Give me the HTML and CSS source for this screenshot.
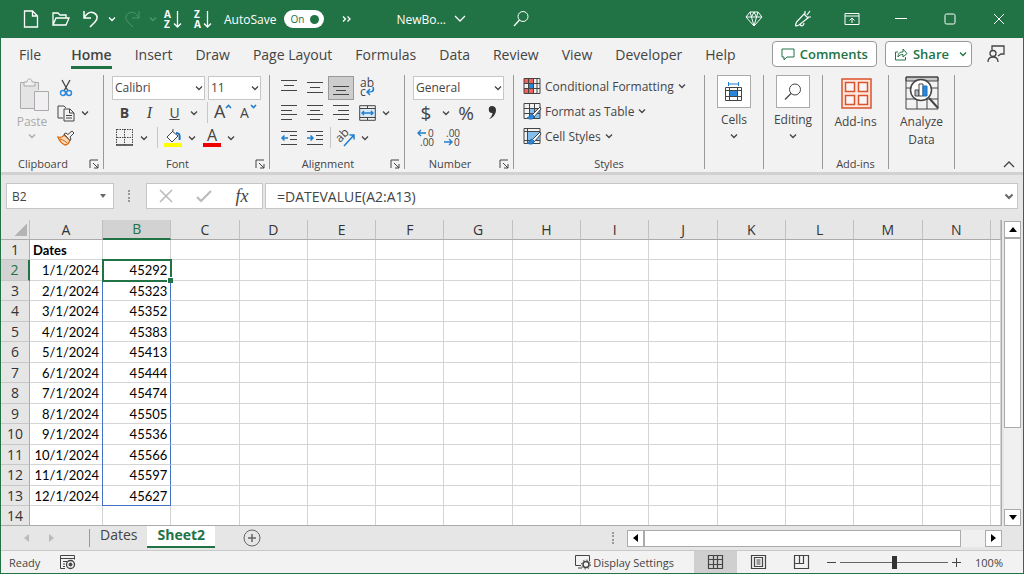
FILE: index.html
```html
<!DOCTYPE html>
<html lang="en">
<head>
  <meta charset="UTF-8">
  <meta name="viewport" content="width=device-width, initial-scale=1.0">
  <title>NewBook - Excel</title>
  <link rel="stylesheet" href="styles.css">
</head>
<body>
  <!-- Shared icons -->
  <svg class="defs" aria-hidden="true">
    <symbol id="chev" viewBox="0 0 8 8"><path d="M1 2.5l3 3 3-3" fill="none" stroke="currentColor" stroke-width="1.3"/></symbol>
    <symbol id="launch" viewBox="0 0 10 10"><path d="M1 9V1h8M4 4l5 5M9 5v4H5" fill="none" stroke="currentColor"/></symbol>
  </svg>

  <header class="titlebar">
    <button class="qat" aria-label="New"><svg width="16" height="18" viewBox="0 0 16 18"><path d="M1.500 1h8l5 5v11h-13zM9.500 1v5h5" stroke-width="1.3"/></svg></button>
    <button class="qat" aria-label="Open"><svg width="18" height="16" viewBox="0 0 18 16"><path d="M1 14V2h5l2 2h6v3M1 14l3-7h13l-3 7z" stroke-width="1.3"/></svg></button>
    <button class="qat" aria-label="Undo"><svg width="18" height="18" viewBox="0 0 18 18"><path d="M2 1v7h7M2 8c3-5 6-7 10-5 4 2 4 6 1 9l-5 5" stroke-width="1.5"/></svg></button>
    <button class="arrow" aria-label="Undo list"><svg class="chev"><use href="#chev"/></svg></button>
    <button class="qat dim" aria-label="Redo"><svg width="18" height="18" viewBox="0 0 18 18"><path d="M16 1v7H9M16 8c-3-5-6-7-10-5-4 2-4 6-1 9l5 5"/></svg></button>
    <button class="arrow dim" aria-label="Redo list"><svg class="chev"><use href="#chev"/></svg></button>
    <button class="qat" aria-label="Sort A to Z"><svg width="20" height="20" viewBox="0 0 20 20"><text x="1" y="9">A</text><text x="1" y="19">Z</text><path d="M14.500 2v16M11 14.500l3.500 3.500 3.500-3.500" stroke-width="1.3"/></svg></button>
    <button class="qat" aria-label="Sort Z to A"><svg width="20" height="20" viewBox="0 0 20 20"><text x="1" y="9">Z</text><text x="1" y="19">A</text><path d="M14.500 2v16M11 14.500l3.500 3.500 3.500-3.500" stroke-width="1.3"/></svg></button>
    <label class="autosave" for="autosave">AutoSave
      <span class="pill">On <input type="checkbox" id="autosave" checked></span>
    </label>
    <button class="more" aria-label="More commands"><svg width="10" height="8" viewBox="0 0 10 8"><path d="M1 1.500l2.500 2.500L1 6.500M5.500 1.500L8 4 5.500 6.500" stroke-width="1.3"/></svg></button>
    <button class="bookname">NewBo... <svg width="12" height="8" viewBox="0 0 12 8"><path d="M1 1l5 5 5-5" stroke-width="1.3"/></svg></button>
    <button class="search" aria-label="Search"><svg width="18" height="18" viewBox="0 0 18 18"><circle cx="11" cy="6.500" r="5"/><path d="M7.500 10L2 16" stroke-width="1.3"/></svg></button>
    <div class="window-buttons">
      <button aria-label="Premium"><svg width="18" height="16" viewBox="0 0 18 16"><path d="M5 1h8l4 5-8 9-8-9zM1 6h16M5 1l1.500 5L9 15l2.500-9L13 1M6.500 6L9 1l2.500 5"/></svg></button>
      <button aria-label="Coming soon"><svg width="18" height="18" viewBox="0 0 18 18"><path d="M10 4l4 4-9 7-3 1-.5-1 1-3zM6 14c1 3 4 2 4-1M11 4V1M13 5l3-4M14 7h3" stroke-width="1.2"/></svg></button>
      <button aria-label="Ribbon display options"><svg width="16" height="14" viewBox="0 0 16 14"><path d="M1 1.500h14v11H1zM1 4h14M8 11V6M5.500 8.500L8 6l2.500 2.500"/></svg></button>
      <button aria-label="Minimize"><svg width="12" height="12" viewBox="0 0 12 12"><path d="M0 5.500h12"/></svg></button>
      <button aria-label="Maximize"><svg width="12" height="12" viewBox="0 0 12 12"><rect x="1" y="1" width="10" height="10" rx="1.500"/></svg></button>
      <button aria-label="Close"><svg width="12" height="12" viewBox="0 0 12 12"><path d="M1 1l10 10M11 1L1 11"/></svg></button>
    </div>
  </header>

  <nav class="tabs">
    <a href="#" class="file">File</a>
    <a href="#" class="active">Home</a>
    <a href="#">Insert</a>
    <a href="#">Draw</a>
    <a href="#">Page Layout</a>
    <a href="#">Formulas</a>
    <a href="#">Data</a>
    <a href="#">Review</a>
    <a href="#">View</a>
    <a href="#">Developer</a>
    <a href="#">Help</a>
    <div class="tab-actions">
      <button class="outlined"><svg width="14" height="14" viewBox="0 0 14 14"><path d="M1 2h12v8H6l-3 3v-3H1z"/></svg>Comments</button>
      <button class="outlined share"><svg width="14" height="14" viewBox="0 0 14 14"><path d="M4 5H1.500v8h10v-3M4 10c0-4 2-5 5-5V2l4 4.500L9 10V7.500C7 7.500 5 8 4 10z"/></svg>Share<svg class="chev"><use href="#chev"/></svg></button>
      <button class="person" aria-label="Feedback"><svg width="20" height="18" viewBox="0 0 20 18"><path d="M6 5V1h12v8h-3l-3 2M2 17c0-4 2-5 5-5s5 1 5 5" stroke-width="1.3"/><circle cx="7" cy="8.500" r="3" stroke-width="1.3"/></svg></button>
    </div>
  </nav>

  <section class="ribbon">
    <div class="group clipboard">
      <div class="clip-tools">
        <button class="paste">
          <svg width="32" height="34" viewBox="0 0 32 34"><path d="M3 5h17v8h-4v17H3z" fill="#e4e4e4" stroke="none"/><path d="M6 4.500H2.500v26H16M20.500 12V4.500H17"/><path d="M6 8V4h3c0-4 5-4 5 0h3v4z" fill="#f0f0f0"/><path d="M16.500 13.500h14v19h-14z" fill="#f1eff1"/></svg>
          Paste
          <svg class="chev"><use href="#chev"/></svg>
        </button>
        <div class="rows">
          <div class="row">
            <button class="tool" aria-label="Cut"><svg width="14" height="18" viewBox="0 0 14 18"><path d="M3 1l6 11M11 1L5 12" stroke-width="1.3"/><g stroke="#2b88d8" stroke-width="1.4"><circle cx="4" cy="14" r="2.500"/><circle cx="10" cy="14" r="2.500"/></g></svg></button>
          </div>
          <div class="row">
            <button class="tool" aria-label="Copy"><svg width="18" height="18" viewBox="0 0 18 18"><path d="M6 14H1V2h6l2 2M7 5h6l4 4v8H7zM12.500 5v4H17M9 11.500h6M9 14h6"/></svg></button>
            <button class="arrow" aria-label="Copy options"><svg class="chev"><use href="#chev"/></svg></button>
          </div>
          <div class="row">
            <button class="tool" aria-label="Format Painter"><svg width="18" height="16" viewBox="0 0 18 16"><path d="M1 7c3 1 5 0 6-2l6 5c-1 3-3 5-5 5C5 14 2 10 1 7z" fill="#fbd9b8" stroke="#d9660b" stroke-width="1.3"/><path d="M3 9c4 1 6 3 7 4" stroke="#d9660b"/><path d="M7 4l2-1 2 1.500L15 1l2 2-4 4 1 2-1 1.500z" fill="#f3f2f2"/></svg></button>
          </div>
        </div>
      </div>
      <div class="group-label">Clipboard<button aria-label="Clipboard settings"><svg><use href="#launch"/></svg></button></div>
    </div>

    <div class="group font">
      <div class="row">
        <span class="pick font-name"><select aria-label="Font"><option>Calibri</option></select><svg class="chev"><use href="#chev"/></svg></span>
        <span class="pick font-size"><select aria-label="Font size"><option>11</option></select><svg class="chev"><use href="#chev"/></svg></span>
      </div>
      <div class="row">
        <button class="tool bold">B</button>
        <button class="tool italic">I</button>
        <button class="tool underline">U</button>
        <button class="arrow" aria-label="Underline options"><svg class="chev"><use href="#chev"/></svg></button>
        <span class="sep"></span>
        <button class="tool" aria-label="Increase font size"><svg width="20" height="18" viewBox="0 0 20 18"><text x="1" y="14" font-size="18">A</text><path d="M13 4l2.500-2.500L18 4" stroke="#1e7fd0" stroke-width="1.600"/></svg></button>
        <button class="tool" aria-label="Decrease font size"><svg width="20" height="18" viewBox="0 0 20 18"><text x="2" y="14" font-size="14">A</text><path d="M13 1l2.500 2.500L18 1" stroke="#1e7fd0" stroke-width="1.600"/></svg></button>
      </div>
      <div class="row">
        <button class="tool" aria-label="Borders"><svg width="17" height="17" viewBox="0 0 17 17"><path d="M.5 0v16M16.500 0v16M1 .5h16M8.500 0v16M1 8.500h15" stroke-dasharray="1.500 1"/><path d="M0 16h17" stroke-width="1.600"/></svg></button>
        <button class="arrow" aria-label="Border options"><svg class="chev"><use href="#chev"/></svg></button>
        <span class="sep"></span>
        <button class="tool" aria-label="Fill color"><svg width="18" height="18" viewBox="0 0 18 18"><path d="M8 2l6 5-6 6-5-5 6-6V0" fill="#fff"/><path d="M12 4c4 0 4 3 3.500 7" stroke="#1e6fbe" stroke-width="2"/><path d="M0 16h18" stroke="#ff0" stroke-width="4"/></svg></button>
        <button class="arrow" aria-label="Fill colors"><svg class="chev"><use href="#chev"/></svg></button>
        <button class="tool" aria-label="Font color"><svg width="18" height="18" viewBox="0 0 18 18"><text x="4" y="12" font-size="16">A</text><path d="M0 16h18" stroke="#e00" stroke-width="4"/></svg></button>
        <button class="arrow" aria-label="Font colors"><svg class="chev"><use href="#chev"/></svg></button>
      </div>
      <div class="group-label">Font<button aria-label="Font settings"><svg><use href="#launch"/></svg></button></div>
    </div>

    <div class="group alignment">
      <div class="row">
        <button class="tool" aria-label="Top align"><svg width="16" height="16" viewBox="0 0 16 16"><path d="M0 .5h16M3 5.500h10M0 10.500h16"/></svg></button>
        <button class="tool" aria-label="Middle align"><svg width="16" height="16" viewBox="0 0 16 16"><path d="M0 2.500h16M3 7.500h10M0 12.500h16"/></svg></button>
        <button class="tool pressed" aria-label="Bottom align"><svg width="16" height="16" viewBox="0 0 16 16"><path d="M0 6.500h16M3 10.500h10M0 14.500h16"/></svg></button>
        <button class="tool" aria-label="Wrap text"><svg width="18" height="20" viewBox="0 0 18 20"><text x="2" y="9" font-size="12">ab</text><text x="2" y="18" font-size="12">c</text><path d="M15 9c2 5-2 5-6 5M12 11l-3 3 3 3" stroke="#1e7fd0" stroke-width="1.500"/></svg></button>
      </div>
      <div class="row">
        <button class="tool" aria-label="Align left"><svg width="16" height="16" viewBox="0 0 16 16"><path d="M0 .5h16M0 5.500h11M0 9.500h16M0 14.500h11"/></svg></button>
        <button class="tool" aria-label="Center"><svg width="16" height="16" viewBox="0 0 16 16"><path d="M0 .5h16M3 5.500h10M0 9.500h16M3 14.500h10"/></svg></button>
        <button class="tool" aria-label="Align right"><svg width="16" height="16" viewBox="0 0 16 16"><path d="M0 .5h16M5 5.500h11M0 9.500h16M5 14.500h11"/></svg></button>
        <button class="tool" aria-label="Merge and center"><svg width="17" height="16" viewBox="0 0 17 16"><path d="M1 4h15v8H1z" fill="#d6eaf8" stroke="none"/><path d="M.7.7h15.600v14.600H.7zM.7 3.500h15.600M.7 12.500h15.600M8.500 1v2.500M8.500 12.500V15"/><path d="M3 8h11M5 6L3 8l2 2M12 6l2 2-2 2" stroke="#1e7fd0" stroke-width="1.400"/></svg></button>
        <button class="arrow" aria-label="Merge options"><svg class="chev"><use href="#chev"/></svg></button>
      </div>
      <div class="row">
        <button class="tool" aria-label="Decrease indent"><svg width="16" height="14" viewBox="0 0 16 14"><path d="M0 .5h16M9 4.500h7M9 8.500h7M0 13.500h16"/><path d="M7 7H1M3.500 4.500L1 7l2.500 2.500" stroke="#1e7fd0" stroke-width="1.500"/></svg></button>
        <button class="tool" aria-label="Increase indent"><svg width="16" height="14" viewBox="0 0 16 14"><path d="M0 .5h16M9 4.500h7M9 8.500h7M0 13.500h16"/><path d="M0 7h6M3.500 4.500L6 7 3.500 9.500" stroke="#1e7fd0" stroke-width="1.500"/></svg></button>
        <span class="sep"></span>
        <button class="tool" aria-label="Orientation"><svg width="18" height="18" viewBox="0 0 18 18"><text x="0" y="11" font-size="12" transform="rotate(-45 5 9)">ab</text><path d="M7 17L17 6M12.500 6H17v4.500" stroke="#1e7fd0" stroke-width="1.500"/></svg></button>
        <button class="arrow" aria-label="Orientation options"><svg class="chev"><use href="#chev"/></svg></button>
      </div>
      <div class="group-label">Alignment<button aria-label="Alignment settings"><svg><use href="#launch"/></svg></button></div>
    </div>

    <div class="group number">
      <div class="row">
        <span class="pick number-format"><select aria-label="Number format"><option>General</option></select><svg class="chev"><use href="#chev"/></svg></span>
      </div>
      <div class="row">
        <button class="tool sign">$</button>
        <button class="arrow" aria-label="Currency options"><svg class="chev"><use href="#chev"/></svg></button>
        <button class="tool sign">%</button>
        <button class="tool" aria-label="Comma style"><svg width="10" height="16" viewBox="0 0 10 16"><path d="M5 1a3.500 3.500 0 1 0 .5 7C5 11 4 12 2 14c4-1 7-5 7-9 0-2.500-2-4-4-4z" fill="#333" stroke="none"/></svg></button>
      </div>
      <div class="row decimals">
        <button class="tool" aria-label="Increase decimal"><svg width="18" height="20" viewBox="0 0 18 20"><text x="11" y="9">0</text><text x="3" y="18">.00</text><path d="M9 5H1M4 2L1 5l3 3" stroke="#1e7fd0" stroke-width="1.400"/></svg></button>
        <button class="tool" aria-label="Decrease decimal"><svg width="18" height="20" viewBox="0 0 18 20"><text x="3" y="9">.00</text><text x="11" y="18">0</text><path d="M1 14h8M6 11l3 3-3 3" stroke="#1e7fd0" stroke-width="1.400"/></svg></button>
      </div>
      <div class="group-label">Number<button aria-label="Number settings"><svg><use href="#launch"/></svg></button></div>
    </div>

    <div class="group styles">
      <div class="row"><button class="style-btn"><svg width="18" height="17" viewBox="0 0 18 17"><path d="M1 1h10v4H1zM1 11h10v5H1z" fill="#f0625d" stroke="none"/><path d="M5 5h5v5H5z" fill="#2b88d8" stroke="none"/><path d="M1 .5h16v15H1zM1 5.500h16M1 10.500h16M5.500 1v15M10.500 1v15M14 1v15"/></svg>Conditional Formatting<svg class="chev"><use href="#chev"/></svg></button></div>
      <div class="row"><button class="style-btn"><svg width="18" height="17" viewBox="0 0 18 17"><path d="M6 6h11v10H6z" fill="#83beec" stroke="none"/><path d="M1 .5h16v15H1zM1 5.500h16M1 10.500h16M6.500 1v15M11.500 1v15"/><path d="M17 4l-8 8 2 2 7-8z" fill="#fff"/><path d="M9 11c-2 0-2 3-5 4 4 2 7 1 7-2z" fill="#2b88d8" stroke="#1e6fbe"/></svg>Format as Table<svg class="chev"><use href="#chev"/></svg></button></div>
      <div class="row"><button class="style-btn"><svg width="18" height="17" viewBox="0 0 18 17"><path d="M4 4h12v9H4z" fill="#83beec" stroke="none"/><path d="M1 .5h16v15H1zM1 3.500h16M1 12.500h16M4.500 1v15"/><path d="M17 4l-8 8 2 2 7-8z" fill="#fff"/><path d="M9 11c-2 0-2 3-5 4 4 2 7 1 7-2z" fill="#2b88d8" stroke="#1e6fbe"/></svg>Cell Styles<svg class="chev"><use href="#chev"/></svg></button></div>
      <div class="group-label">Styles</div>
    </div>

    <div class="group cells">
      <button class="big">
        <span class="frame"><svg width="20" height="20" viewBox="0 0 20 20"><path d="M5 8h9v6H5z" fill="#2b88d8" stroke="none"/><path d="M1.500 5.500h16v13h-16zM1 8.500h17M1 14.500h17M5.500 5v13M13.500 5v13"/><path d="M4 2h11M4.500 0v4M14.500 0v4" stroke="#1e7fd0"/></svg></span>
        Cells
        <svg class="chev"><use href="#chev"/></svg>
      </button>
    </div>

    <div class="group editing">
      <button class="big">
        <span class="frame"><svg width="18" height="18" viewBox="0 0 18 18"><circle cx="11" cy="6.500" r="5.500"/><path d="M7 10.500L1 16.500" stroke-width="1.3"/></svg></span>
        Editing
        <svg class="chev"><use href="#chev"/></svg>
      </button>
    </div>

    <div class="group addins">
      <button class="big">
        <svg width="32" height="34" viewBox="0 0 32 34"><g stroke="#d9532c" stroke-width="1.500"><path d="M2 3h29v29H2z" fill="#fde8df"/><path d="M5.500 6.500h9v9h-9zM18.500 6.500h9v9h-9zM5.500 19.500h9v9h-9zM18.500 19.500h9v9h-9z" fill="#f7f5f5"/></g></svg>
        Add-ins
      </button>
      <div class="group-label">Add-ins</div>
    </div>

    <div class="group analyze">
      <button class="big">
        <svg width="34" height="34" viewBox="0 0 34 34"><path d="M1 1h32v4H1z" fill="#c8c8c8"/><path d="M1 1h32v32H1zM1 12h5M27 12h6M1 23h32M12 22v11M22 22v11"/><circle cx="16" cy="14" r="10.500" fill="#fff" stroke-width="1.500"/><path d="M24 22l9 10" stroke-width="2"/><path d="M10 14h4v6h-4z" fill="#bbb"/><path d="M14 8h4v12h-4z" fill="#fff"/><path d="M18 10h4v10h-4z" fill="#2b88d8" stroke="#1e6fbe"/></svg>
        Analyze<br>Data
      </button>
    </div>

    <button class="collapse" aria-label="Collapse ribbon"><svg width="12" height="8" viewBox="0 0 12 8"><path d="M1 6l5-5 5 5" stroke-width="1.300"/></svg></button>
  </section>

  <section class="formula-bar">
    <div class="namebox">
      <input type="text" value="B2" aria-label="Name box">
      <button aria-label="Names"><svg width="8" height="5" viewBox="0 0 8 5"><path d="M1 0h6L4 4z" fill="#666" stroke="none"/></svg></button>
    </div>
    <span class="grip"></span>
    <div class="fx-buttons">
      <button aria-label="Cancel"><svg width="14" height="14" viewBox="0 0 14 14"><path d="M1 1l12 12M13 1L1 13" stroke="#bbb" stroke-width="1.600"/></svg></button>
      <button aria-label="Enter"><svg width="16" height="14" viewBox="0 0 16 14"><path d="M1 8l4 4L15 2" stroke="#bbb" stroke-width="2.200"/></svg></button>
      <button class="fx">fx</button>
    </div>
    <div class="formula">
      <input type="text" value="=DATEVALUE(A2:A13)" aria-label="Formula">
      <button aria-label="Expand"><svg width="10" height="7" viewBox="0 0 10 7"><path d="M1.500 1.500L5 5l3.500-3.500" stroke="#666" stroke-width="2"/></svg></button>
    </div>
  </section>

  <main class="sheet">
    <div class="grid">
      <table>
        <colgroup id="cols"></colgroup>
        <thead><tr id="head"></tr></thead>
        <tbody id="cells"></tbody>
      </table>
    </div>
    <div class="vscroll">
      <button aria-label="Scroll up"><svg width="8" height="5" viewBox="0 0 8 5"><path d="M0 5h8L4 0z"/></svg></button>
      <div class="thumb"></div>
      <button class="end" aria-label="Scroll down"><svg width="8" height="5" viewBox="0 0 8 5"><path d="M0 0h8L4 5z"/></svg></button>
    </div>
  </main>

  <section class="sheet-tabs">
    <div class="sheet-nav">
      <button aria-label="Previous sheet"><svg width="5" height="8" viewBox="0 0 5 8"><path d="M5 0v8L0 4z"/></svg></button>
      <button aria-label="Next sheet"><svg width="5" height="8" viewBox="0 0 5 8"><path d="M0 0v8l5-4z"/></svg></button>
    </div>
    <a href="#" class="sheet-tab">Dates</a>
    <a href="#" class="sheet-tab current">Sheet2</a>
    <button class="add-sheet" aria-label="New sheet"><svg width="18" height="18" viewBox="0 0 18 18"><circle cx="9" cy="9" r="8"/><path d="M9 5v8M5 9h8" stroke-width="1.500"/></svg></button>
    <span class="grip"></span>
    <div class="hscroll">
      <button aria-label="Scroll left"><svg width="5" height="8" viewBox="0 0 5 8"><path d="M5 0v8L0 4z"/></svg></button>
      <div class="thumb"></div>
      <button class="end" aria-label="Scroll right"><svg width="5" height="8" viewBox="0 0 5 8"><path d="M0 0v8l5-4z"/></svg></button>
    </div>
  </section>

  <footer class="status">
    <span>Ready</span>
    <button class="macro" aria-label="Record macro"><svg width="16" height="15" viewBox="0 0 16 15"><path d="M5 13.500H.5v-13h14v4M1 3.500h14M3 6.500h4M3 9h2M3 11.500h2"/><circle cx="10.500" cy="9.500" r="4" stroke-width="1.3"/><circle cx="10.500" cy="9.500" r="1.500" fill="#444"/></svg></button>
    <button class="display"><svg width="16" height="14" viewBox="0 0 16 14"><path d="M6 10.500H.5V.5h14V6M3 13h4"/><circle cx="11" cy="9.500" r="3" stroke-width="1.500"/><circle cx="11" cy="9.500" r="4.500" stroke-dasharray="1.500 2"/></svg>Display Settings</button>
    <button class="view active" aria-label="Normal view"><svg width="15" height="14" viewBox="0 0 15 14"><path d="M.5.5h14v13H.5zM1 4.500h13M1 9.500h13M5.500 1v12M9.500 1v12" stroke-width="1.2"/></svg></button>
    <button class="view" aria-label="Page layout view"><svg width="15" height="14" viewBox="0 0 15 14"><path d="M.5.500h14v13H.5zM3.500 2.500h8v9h-8zM5.500 5h4M5.500 7h4M5.500 9h4" stroke-width="1.2"/></svg></button>
    <button class="view" aria-label="Page break view"><svg width="15" height="14" viewBox="0 0 15 14"><path d="M.5.500h14v13H.5zM1 8.500h8.500V1M5.500 1v7" stroke-width="1.2"/></svg></button>
    <button class="zoom-step" aria-label="Zoom out"><svg width="9" height="9" viewBox="0 0 9 9"><path d="M0 4.500h9"/></svg></button>
    <input type="range" min="0" max="100" value="50" aria-label="Zoom">
    <button class="zoom-step" aria-label="Zoom in"><svg width="9" height="9" viewBox="0 0 9 9"><path d="M0 4.500h9M4.500 0v9"/></svg></button>
    <button class="percent">100%</button>
  </footer>

  <script>
    const columns = ['A', 'B', 'C', 'D', 'E', 'F', 'G', 'H', 'I', 'J', 'K', 'L', 'M', 'N', ''];
    const values = [45292, 45323, 45352, 45383, 45413, 45444, 45474, 45505, 45536, 45566, 45597, 45627];

    // Column widths and letters
    document.getElementById('cols').innerHTML =
      '<col class="col-num"><col class="col-a">' + '<col>'.repeat(13) + '<col class="col-last">';
    document.getElementById('head').innerHTML =
      '<th class="corner"></th>' + columns.map(c => `<th class="${c === 'B' ? 'on' : ''}">${c}</th>`).join('');

    // Rows 1 to 14
    let rows = '';
    for (let r = 1; r <= 14; r++) {
      let a = '', b = '', cls = '';
      if (r === 1) a = '<b>Dates</b>';
      if (r >= 2 && r <= 13) {
        a = `${r - 1}/1/2024`;
        b = values[r - 2];
        cls = 'spill';
      }
      if (r === 2) cls += ' selected';
      if (r === 13) cls += ' last';
      rows += `<tr><th class="${r === 2 ? 'on' : ''}">${r}</th>
        <td class="${r === 1 ? 'text' : ''}">${a}</td><td class="${cls}">${b}</td>${'<td></td>'.repeat(13)}</tr>`;
    }
    document.getElementById('cells').innerHTML = rows;
  </script>
</body>
</html>
```
FILE: styles.css
```css
* {
  box-sizing: border-box;
}

body {
  margin: 0;
  height: 100vh;
  display: flex;
  flex-direction: column;
  border: 1px solid #217346;
  border-top: none;
  background-color: #e6e6e6;
  font-family: "Open Sans", "Noto Sans", sans-serif;
  font-size: 12px;
  color: #444;
  overflow: hidden;
}

button {
  display: flex;
  align-items: center;
  justify-content: center;
  flex-shrink: 0;
  padding: 0;
  border: none;
  background: none;
  font: inherit;
  color: inherit;
}

input, select {
  font: inherit;
  color: inherit;
  outline: none;
}

a {
  color: inherit;
  text-decoration: none;
}

svg {
  flex-shrink: 0;
  fill: none;
  stroke: currentColor;
  overflow: visible;
}

svg text {
  fill: currentColor;
  stroke: none;
}

.defs {
  position: absolute;
  width: 0;
  height: 0;
}

.chev {
  width: 8px;
  height: 8px;
}

.arrow {
  width: 14px;
  height: 24px;
}

/* Title bar */
.titlebar {
  display: flex;
  align-items: center;
  flex-shrink: 0;
  height: 38px;
  padding-left: 15px;
  background-color: #217346;
  color: #fff;
}

.qat {
  width: 30px;
  height: 38px;
}

.qat text {
  font-size: 10px;
  font-weight: bold;
}

.titlebar .arrow {
  width: 11px;
}

.dim {
  color: #4f9670;
}

.autosave {
  display: flex;
  align-items: center;
  gap: 8px;
  margin-left: 6px;
}

.pill {
  display: flex;
  align-items: center;
  justify-content: space-between;
  width: 40px;
  height: 18px;
  padding: 0 5px 0 6px;
  border-radius: 9px;
  background-color: #fff;
  color: #217346;
  font-size: 10px;
}

.pill input {
  appearance: none;
  width: 9px;
  height: 9px;
  margin: 0;
  border-radius: 50%;
  background-color: #217346;
}

.more {
  margin-left: 18px;
}

.bookname {
  gap: 8px;
  margin-left: 44px;
}

.search {
  margin-left: 46px;
}

.window-buttons {
  display: flex;
  margin-left: auto;
}

.window-buttons button {
  width: 49px;
  height: 38px;
}

/* Ribbon tabs */
.tabs {
  display: flex;
  align-items: center;
  flex-shrink: 0;
  gap: 23px;
  height: 34px;
  padding: 0 17px 0 18px;
  background-color: #f3f2f2;
  font-size: 14px;
  white-space: nowrap;
}

.tabs > a {
  padding-top: 3px;
  line-height: 22px;
  border-bottom: 3px solid transparent;
}

.tabs .file {
  margin-right: 7px;
}

.tabs .active {
  font-weight: 600;
  border-color: #217346;
}

.tab-actions {
  display: flex;
  align-items: center;
  gap: 8px;
  height: 100%;
  margin-left: auto;
  padding-bottom: 2px;
}

.outlined {
  gap: 5px;
  height: 26px;
  padding: 0 8px;
  border: 1px solid #999;
  border-radius: 4px;
  background-color: #fff;
  color: #217346;
  font-size: 13px;
  font-weight: 600;
}

.share {
  padding-right: 4px;
}

.share .chev {
  margin-left: 5px;
}

.person {
  margin-left: 6px;
}

/* Ribbon */
.ribbon {
  display: flex;
  flex-shrink: 0;
  height: 103px;
  padding-top: 3px;
  background-color: #f3f2f2;
  border-bottom: 3px solid #d2d0d0;
}

.group {
  position: relative;
  flex-shrink: 0;
  height: 94px;
  border-right: 1px solid #999;
}

.row {
  display: flex;
  align-items: center;
  height: 25px;
}

.tool {
  width: 25px;
  height: 24px;
}

.sep {
  flex-shrink: 0;
  width: 1px;
  height: 21px;
  background-color: #c6c6c6;
}

.group-label {
  position: absolute;
  left: 0;
  right: 0;
  bottom: -3px;
  font-size: 11px;
  line-height: 16px;
  text-align: center;
}

.font .group-label,
.clipboard .group-label,
.alignment .group-label,
.number .group-label {
  padding-right: 18px;
}

.group-label button {
  position: absolute;
  right: 4px;
  top: 3px;
}

.group-label svg {
  width: 10px;
  height: 10px;
}

.clipboard {
  width: 103px;
}

.clip-tools {
  display: flex;
}

.paste {
  flex-direction: column;
  justify-content: flex-start;
  width: 38px;
  margin-left: 12px;
  padding-top: 3px;
  color: #aaa;
  line-height: 20px;
}

.paste > svg:first-child {
  margin-left: 3px;
}

.clip-tools .rows {
  margin-left: 2px;
}

.font {
  width: 166px;
  padding-left: 8px;
}

.font .sep {
  margin: 0 2px 0 6px;
}

.pick {
  position: relative;
  display: flex;
  align-items: center;
}

.pick select {
  appearance: none;
  width: 100%;
  height: 24px;
  padding: 0 2px;
  border: 1px solid #c6c6c6;
  border-radius: 0;
  background-color: #fff;
}

.pick .chev {
  position: absolute;
  right: 2px;
  pointer-events: none;
}

.font-name {
  width: 93px;
  margin-right: 3px;
}

.font-size {
  width: 53px;
}

.number-format {
  width: 91px;
}

.bold {
  font-size: 14px;
  font-weight: bold;
}

.italic {
  font-family: "Liberation Serif", serif;
  font-size: 16px;
  font-style: italic;
}

.underline {
  font-size: 14px;
  text-decoration: underline;
}

.alignment {
  width: 135px;
  padding-left: 6px;
}

.alignment .tool {
  width: 26px;
}

.alignment .arrow {
  width: 12px;
}

.alignment .sep {
  margin: 0 2px;
}

.alignment .pressed {
  border: 1px solid #999;
  background-color: #cdcdcd;
}

.number {
  width: 109px;
  padding-left: 8px;
}

.number .tool {
  width: 26px;
}

.sign {
  font-size: 19px;
}

.decimals text {
  font-size: 10px;
}

.styles {
  width: 191px;
  padding-left: 9px;
}

.style-btn {
  gap: 4px;
  height: 22px;
  margin-bottom: 3px;
}

.cells, .editing {
  width: 59px;
}

.addins, .analyze {
  width: 66px;
}

.big {
  flex-direction: column;
  justify-content: flex-start;
  width: 100%;
  line-height: 18px;
}

.big > svg:first-child {
  margin: 1px 0 3px;
}

.frame {
  display: flex;
  align-items: center;
  justify-content: center;
  width: 34px;
  height: 33px;
  margin-bottom: 3px;
  border: 1px solid #aaa;
  background-color: #fff;
}

.big .chev {
  margin-top: 3px;
}

.collapse {
  align-self: flex-end;
  margin: 0 8px 3px auto;
}

/* Formula bar */
.formula-bar {
  display: flex;
  align-items: center;
  flex-shrink: 0;
  height: 45px;
  padding: 0 5px 3px;
}

.namebox, .fx-buttons, .formula {
  display: flex;
  align-items: center;
  height: 26px;
  border: 1px solid #c6c6c6;
  background-color: #fff;
}

.namebox {
  width: 108px;
  padding: 0 6px 0 5px;
}

.namebox input, .formula input {
  flex: 1;
  min-width: 0;
  padding: 0;
  border: none;
}

.grip {
  width: 2px;
  height: 12px;
  border-left: 2px dotted #999;
}

.formula-bar .grip {
  margin: 0 16px 0 14px;
}

.fx-buttons {
  width: 117px;
  margin-right: 2px;
}

.fx-buttons button {
  width: 38px;
}

.fx-buttons .fx {
  font-family: "Liberation Serif", serif;
  font-size: 18px;
  font-style: italic;
}

.formula {
  flex: 1;
  padding: 0 3px 0 11px;
}

.formula input {
  font-size: 14px;
}

/* Sheet */
.sheet {
  display: flex;
  flex: 1;
  min-height: 0;
}

.grid {
  flex: 1;
  overflow: hidden;
  border-right: 1px solid #ababab;
  border-bottom: 1px solid #ababab;
  background-color: #fff;
}

.grid table {
  width: 100%;
  table-layout: fixed;
  border-collapse: separate;
  border-spacing: 0;
  color: #000;
}

.grid tr {
  height: 20px;
}

.grid tbody tr:nth-child(even) {
  height: 21px;
}

.col-num {
  width: 29px;
}

.col-a {
  width: 73px;
}

.col-last {
  width: 10px;
}

.grid th {
  padding: 0;
  border-right: 1px solid #ababab;
  background-color: #e6e6e6;
  color: #333;
  font-size: 14px;
  font-weight: normal;
  line-height: 18px;
}

.grid thead th {
  border-right-color: #c0c0c0;
  border-bottom: 1px solid #ababab;
}

.grid tbody th {
  border-bottom: 1px solid #c8c8c8;
}

.grid .on {
  background-color: #d2d2d2;
  color: #217346;
}

.grid thead .on {
  border-bottom: 2px solid #217346;
}

.grid tbody .on {
  border-right: 2px solid #217346;
}

.grid .corner {
  background-image: linear-gradient(135deg, transparent 50%, #b4b4b4 50%);
  background-repeat: no-repeat;
  background-size: 13px 13px;
  background-position: right 2px bottom 3px;
}

.grid td {
  padding: 0 3px;
  border-right: 1px solid #d4d4d4;
  border-bottom: 1px solid #d4d4d4;
  background-color: #fff;
  font-family: Lato, "Open Sans", sans-serif;
  font-size: 13px;
  line-height: 16px;
  text-align: right;
}

.grid .text {
  text-align: left;
}

.grid .spill {
  position: relative;
  border-right-color: #4472c4;
  box-shadow: -1px 0 #4472c4;
}

.grid .last {
  border-bottom-color: #4472c4;
}

.grid .selected {
  outline: 2px solid #217346;
  outline-offset: -1px;
  z-index: 1;
}

/* Fill handle */
.grid .selected::after {
  content: "";
  position: absolute;
  right: -3px;
  bottom: -3px;
  width: 5px;
  height: 5px;
  border: 1px solid #fff;
  border-width: 1px 0 0 1px;
  background-color: #217346;
}

/* Scroll bars */
.vscroll, .hscroll {
  display: flex;
  background-color: #f0f0f0;
}

.vscroll {
  flex-direction: column;
  width: 17px;
  margin: 1px 2px 0;
}

.vscroll button, .hscroll button {
  width: 17px;
  height: 17px;
  border: 1px solid #ababab;
  background-color: #fff;
  color: #000;
}

.vscroll svg, .hscroll svg, .sheet-nav svg {
  fill: currentColor;
  stroke: none;
}

.thumb {
  border: 1px solid #ababab;
  background-color: #fff;
}

.vscroll .thumb {
  flex: 0 1 190px;
}

.vscroll .end {
  margin-top: auto;
}

.hscroll {
  flex: 0 0 375px;
}

.hscroll .thumb {
  width: 317px;
}

.hscroll .end {
  margin-left: auto;
}

/* Sheet tabs */
.sheet-tabs {
  display: flex;
  align-items: center;
  flex-shrink: 0;
  height: 24px;
  padding-right: 21px;
}

.sheet-nav {
  display: flex;
  gap: 20px;
  height: 18px;
  width: 89px;
  padding-left: 23px;
  border-right: 1px solid #999;
  color: #bbb;
}

.sheet-tab {
  align-self: flex-start;
  height: 22px;
  padding: 0 10px;
  font-size: 14px;
  line-height: 18px;
}

.sheet-tab.current {
  border-bottom: 2px solid #217346;
  background-color: #fff;
  color: #217346;
  font-weight: bold;
}

.add-sheet {
  margin: 0 auto 0 28px;
  color: #666;
}

.sheet-tabs .grip {
  margin-right: 13px;
}

/* Status bar */
.status {
  display: flex;
  align-items: center;
  flex-shrink: 0;
  height: 23px;
  padding: 0 20px 0 8px;
  border-top: 1px solid #c8c8c8;
  background-color: #f3f2f2;
  font-size: 11px;
}

.macro {
  margin-left: 20px;
}

.display {
  gap: 2px;
  margin: 0 20px 0 auto;
}

.view {
  width: 43px;
  height: 22px;
}

.view.active {
  background-color: #cfcfcf;
}

.zoom-step {
  margin: 0 4px;
}

.status input {
  appearance: none;
  width: 108px;
  height: 13px;
  margin: 0;
  background: linear-gradient(#666, #666) center / 100% 1px no-repeat;
}

.status input::-webkit-slider-thumb {
  appearance: none;
  width: 5px;
  height: 13px;
  background-color: #333;
}

.percent {
  margin-left: 10px;
}
```
